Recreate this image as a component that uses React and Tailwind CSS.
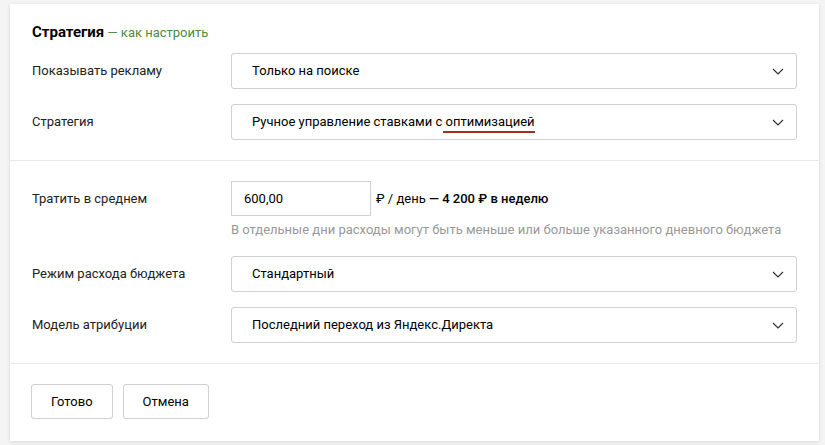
function Chevron() {
  return (
    <svg width="12" height="7" viewBox="0 0 12 7" fill="none" className="shrink-0">
      <path d="M1 1l5 5 5-5" stroke="#333" strokeWidth="1.2" />
    </svg>
  );
}

function Select({ children }) {
  return (
    <div className="flex h-9 flex-1 items-center justify-between rounded-[3px] border border-[#d0d0d0] pl-5 pr-3 text-[13px] text-black">
      <span>{children}</span>
      <Chevron />
    </div>
  );
}

function Row({ label, children }) {
  return (
    <div className="flex items-center">
      <div className="w-[199px] shrink-0 text-[13px] text-[#222]">{label}</div>
      {children}
    </div>
  );
}

export default function App() {
  return (
    <div className="h-[445px] w-[825px] bg-[#f4f4f4] pt-[4px] font-['Roboto',sans-serif]">
      <div className="ml-[10px] w-[809px] bg-white shadow-[0_1px_4px_rgba(0,0,0,0.12)]">
        <div className="px-[22px] pb-5 pt-[18px]">
          <div className="h-5 text-[15px] leading-5">
            <span className="font-bold text-black">Стратегия</span>
            <span className="text-[13px] text-[#4b8c3f]"> — как настроить</span>
          </div>
          <div className="mt-[11px] flex flex-col gap-[15px]">
            <Row label="Показывать рекламу">
              <Select>Только на поиске</Select>
            </Row>
            <Row label="Стратегия">
              <Select>
                Ручное управление ставками с{" "}
                <span className="-ml-[3px] border-b-2 border-[#a3301e] pb-[2px] pl-[3px]">оптимизацией</span>
              </Select>
            </Row>
          </div>
        </div>

        <div className="border-t border-[#e8e8e8] px-[22px] py-5">
          <Row label="Тратить в среднем">
            <div className="flex h-[35px] w-[140px] items-center border border-[#d0d0d0] pl-[12px] text-[13px] text-black">
              600,00
            </div>
            <div className="ml-[5px] text-[13px] text-black">
              ₽ / день <span className="font-medium">— 4 200 ₽ в неделю</span>
            </div>
          </Row>
          <div className="mt-[4px] pl-[199px] text-[13px] leading-5 text-[#999]">
            В отдельные дни расходы могут быть меньше или больше указанного дневного бюджета
          </div>
          <div className="mt-[16px] flex flex-col gap-[15px]">
            <Row label="Режим расхода бюджета">
              <Select>Стандартный</Select>
            </Row>
            <Row label="Модель атрибуции">
              <Select>Последний переход из Яндекс.Директа</Select>
            </Row>
          </div>
        </div>

        <div className="flex gap-[10px] border-t border-[#e8e8e8] px-[21px] pb-[22px] pt-5">
          <button className="h-[35px] rounded-[3px] border border-[#d0d0d0] bg-white px-[19px] text-[13px] text-black">
            Готово
          </button>
          <button className="h-[35px] rounded-[3px] border border-[#d0d0d0] bg-white px-[19px] text-[13px] text-black">
            Отмена
          </button>
        </div>
      </div>
    </div>
  );
}
